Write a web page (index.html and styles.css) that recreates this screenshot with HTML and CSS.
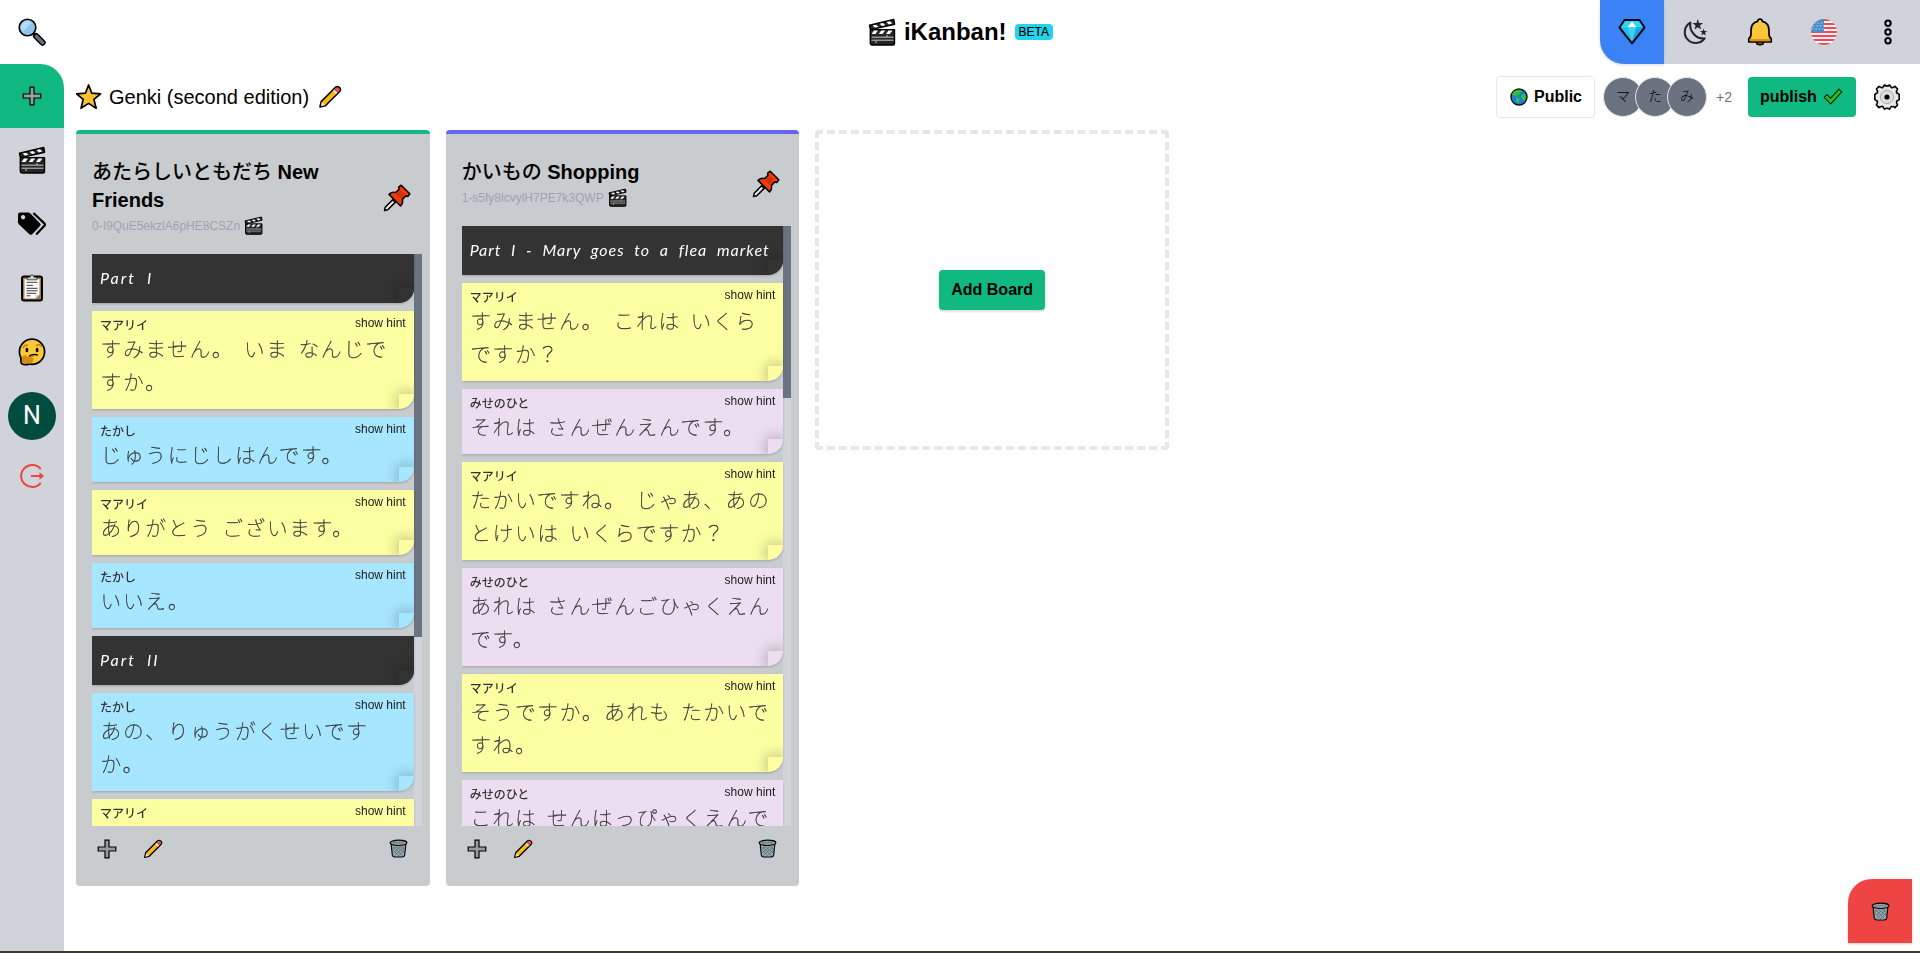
FILE: index.html
```html
<!DOCTYPE html>
<html lang="en">
<head>
<meta charset="utf-8">
<title>iKanban!</title>
<link rel="stylesheet" href="styles.css">
</head>
<body>
<svg class="defs" aria-hidden="true">
  <symbol id="clapper" viewBox="0 0 28 28">
    <path d="M1.5 7.2 25.8 1.5 26.6 6.2 3 11.6H26.5V25.5Q26.5 27 25 27H4Q2.3 27 2.3 25.3V11.4Z" fill="#262626" stroke="#000" stroke-width="1.4" stroke-linejoin="round"/>
    <path d="M4.5 7.6 8 6.7 10.6 8.8 7.2 9.7ZM11.5 5.8 15 5 17.4 7.2 14 8ZM18.5 4.1 22 3.3 24.3 5.5 20.8 6.4Z" fill="#fff"/>
    <path d="M6 12.5H10L7.4 16H3.6ZM13.2 12.5H17.2L14.6 16H10.8ZM20.4 12.5H24.4L21.8 16H18Z" fill="#fff"/>
    <path d="M3.5 19.2H25.5M3.5 22.2H25.5M19 17V19M8 22.5V25" stroke="#c8c8c8" stroke-width="1"/>
  </symbol>
  <symbol id="plus" viewBox="0 0 20 20">
    <path d="M8 1.2H12V8H18.8V12H12V18.8H8V12H1.2V8H8Z" fill="#9b9b9a" stroke="#000" stroke-width="1.2"/>
  </symbol>
  <symbol id="pencil" viewBox="0 0 24 24">
    <path d="M2 22 3.2 16.6 17 2.8Q19.2.7 21.6 2.6 23.4 4.8 21.2 7L7.4 20.8Z" fill="#fcb90e" stroke="#000" stroke-width="1.6" stroke-linejoin="round"/>
    <path d="M17.4 3.7Q19.4 1.9 21 3.2 22.4 5 20.5 6.7L19.4 7.7 16.2 4.9Z" fill="#e8465a"/>
    <path d="M16.2 4.9 19.4 7.7 17.9 9.2 14.8 6.3Z" fill="#e3e3e3"/>
    <path d="M3.8 17.1 7 20.2 2.9 21.2Z" fill="#f5d6d8"/>
  </symbol>
  <symbol id="trash" viewBox="0 0 20 20">
    <path d="M2.2 4.6 3.5 17Q3.9 19 6.2 19H13.8Q16.1 19 16.5 17L17.8 4.6Z" fill="#9aabb2" stroke="#000" stroke-width="1.2"/>
    <path d="M4.2 8 14.5 17.5M8 8 16 14.5M12 8 16.6 11.2M4.8 12 10 17.5M15.8 8 5.5 17.5M12 8 4.8 14.4M8 8 4 11M16 11.5 10 17.5" stroke="#55646b" stroke-width=".8"/>
    <ellipse cx="10" cy="4" rx="8.9" ry="2.8" fill="#8fa0a7" stroke="#000" stroke-width="1.2"/>
    <path d="M4 4H16" stroke="#5c6c73" stroke-dasharray="2 1"/>
  </symbol>
  <symbol id="pin" viewBox="0 0 28 28">
    <path d="M1.5 26.6 2.2 23.2 9.6 15.8 12.2 18.4 4.8 25.8Z" fill="#e6e6e6" stroke="#000" stroke-width="1.5" stroke-linejoin="round"/>
    <path d="M18.2 1.2 26.8 9.8 25 12.4 22.8 12 19.4 15.4Q20.4 19 17.6 22L6 10.4Q9 7.6 12.6 8.6L16 5.2 15.6 3Z" fill="#f0390e" stroke="#000" stroke-width="1.5" stroke-linejoin="round"/>
    <path d="M12.8 10 17 6 22 11 18 14.6Z" fill="#cc3404"/>
  </symbol>
</svg>

<header class="topbar">
  <div class="tile">
    <svg width="28" height="28" viewBox="0 0 28 28">
      <path d="M18 18 24.6 24.6" stroke="#000" stroke-width="6.2" stroke-linecap="round"/>
      <path d="M14.5 14.5 18.5 18.5" stroke="#000" stroke-width="3"/>
      <path d="M18.4 18.4 24.6 24.6" stroke="#65757d" stroke-width="3.2" stroke-linecap="round"/>
      <circle cx="9.5" cy="9.5" r="8.3" fill="#8cc4f2" stroke="#000" stroke-width="1.6"/>
      <path d="M3.2 10.5A6.5 6.5 0 0 1 13.5 4.4L4.8 14Z" fill="#b5dbf7"/>
    </svg>
  </div>
  <div class="brand">
    <svg width="28" height="28"><use href="#clapper"/></svg>
    <span class="brand-name">iKanban!</span>
    <span class="badge">BETA</span>
  </div>
  <nav class="top-actions">
    <div class="tile tile-blue">
      <svg width="28" height="28" viewBox="0 0 28 28">
        <path d="M6.5 2H21.5L26.5 9.6 14 25.4 1.5 9.6Z" fill="#20b9ea"/>
        <path d="M6.5 2H21.5L26.5 9.6H1.5Z" fill="#31d3f5"/>
        <path d="M14 3.5 18.5 9.2H9.5Z" fill="#fff"/>
        <path d="M9.5 9.2H18.5L14 24Z" fill="#3fd0f5"/><path d="M18.5 9.2H26L14 24Z" fill="#1ca3e0"/>
        <path d="M6.5 2H21.5L26.5 9.6 14 25.4 1.5 9.6Z" fill="none" stroke="#000" stroke-width="1.9" stroke-linejoin="round"/>
      </svg>
    </div>
    <div class="tile">
      <svg width="28" height="28" viewBox="0 0 28 28">
        <path d="M8.4 4.6A10.9 10.9 0 1 0 22.6 20.4C14.4 21.4 7 13.8 8.4 4.6Z" fill="none" stroke="#26272b" stroke-width="2.1" stroke-linejoin="round"/>
        <path d="M15.8 1 17.1 5H21.2L18 7.5 19.1 11.5 15.8 9.2 12.5 11.5 13.6 7.5 10.4 5H14.5Z" fill="#26272b"/>
        <path d="M21.6 10.4 22.5 13.1H25.2L23.1 14.8 23.9 17.4 21.6 15.9 19.3 17.4 20.1 14.8 18 13.1H20.7Z" fill="#26272b"/>
      </svg>
    </div>
    <div class="tile">
      <svg width="28" height="28" viewBox="0 0 28 28">
        <ellipse cx="14" cy="24" rx="3.6" ry="2.8" fill="#b25a10" stroke="#000" stroke-width="1.5"/>
        <path d="M2.8 24V20.5Q5 19.4 5 16V12.5Q5 5 11.6 3.4 12 1 14 1 16 1 16.4 3.4 23 5 23 12.5V16Q23 19.4 25.2 20.5V24Z" fill="#fdc63c" stroke="#000" stroke-width="1.7" stroke-linejoin="round"/>
        <path d="M3.7 21H24.3V23.1H3.7Z" fill="#e39114"/>
      </svg>
    </div>
    <div class="tile">
      <svg width="28" height="28" viewBox="0 0 28 28">
        <clipPath id="disc"><circle cx="14" cy="14" r="13"/></clipPath>
        <g clip-path="url(#disc)">
          <rect width="28" height="28" fill="#f7f4f4"/>
          <path d="M0 2H28M0 6H28M0 10H28M0 14H28M0 18H28M0 22H28M0 26H28" stroke="#ee4a5b" stroke-width="2"/>
          <rect width="14" height="14" fill="#4a8fc8"/>
          <path d="M4 5H14M3 8H14M2 11H14" stroke="#b9d6ec" stroke-width="1.2" stroke-dasharray="1.4 2"/>
        </g>
      </svg>
    </div>
    <div class="tile">
      <svg width="28" height="28" viewBox="0 0 28 28"><g fill="none" stroke="#000" stroke-width="2"><circle cx="14" cy="5.3" r="2.7"/><circle cx="14" cy="14" r="2.7"/><circle cx="14" cy="22.7" r="2.7"/></g></svg>
    </div>
  </nav>
</header>

<div class="shell">
  <aside class="sidebar">
    <div class="tile tile-add"><svg width="20" height="20"><use href="#plus"/></svg></div>
    <div class="tile"><svg width="28" height="28"><use href="#clapper"/></svg></div>
    <div class="tile">
      <svg width="28" height="28" viewBox="0 0 28 28">
        <path fill-rule="evenodd" d="M0 4.5Q0 2.5 2 2.5H10.6L12.2 3.2 22.2 13.4Q23.2 14.6 22.2 15.8L14.2 24.3Q12.6 25.4 11.4 24.3L.8 14.2 0 12.6ZM5 5A2.2 2.2 0 1 0 5.1 5Z"/>
        <path d="M15.4 3 26.6 13.6Q27.4 14.6 26.6 15.6L18.2 24.6" fill="none" stroke="#000" stroke-width="2.2"/>
      </svg>
    </div>
    <div class="tile">
      <svg width="28" height="28" viewBox="0 0 28 28">
        <rect x="4" y="2.6" width="20" height="24" rx="2" fill="#a9744a" stroke="#000" stroke-width="2"/>
        <path d="M6.5 5H21.5V20.5L17.5 24.6H6.5Z" fill="#fff"/><path d="M21.5 20.5H17.5V24.6Z" fill="#d8d8d8"/>
        <path d="M9 5.8V3.2H11.8Q12 .8 14 .8T16.2 3.2H19V5.8Z" fill="#cfcfcf" stroke="#222" stroke-width=".8"/>
        <path d="M8.5 8.3H19.5M8.5 11.3H15M8.5 14.3H19.5M8.5 16.8H19.5M8.5 19.3H18M8.5 21.8H12.5" stroke="#3a3a3a"/>
      </svg>
    </div>
    <div class="tile">
      <svg width="28" height="28" viewBox="0 0 28 28">
        <circle cx="14" cy="13.7" r="12.6" fill="#fcc836" stroke="#000" stroke-width="1.7"/>
        <path d="M3.2 25Q2.4 20 4.4 18.5 6.8 16 9.5 18.8L16 17.6Q17 18.6 12.6 20.3 16.4 19.6 15.6 21.6 15.2 24.5 10.5 26.3 6 27 3.2 25Z" fill="#d98a14"/>
        <path d="M5 10Q6.8 6.2 10 7.4M18 7.8Q21 5.2 23.8 8.8" fill="none" stroke="#c07d13" stroke-width="1.5"/>
        <ellipse cx="8.9" cy="12" rx="1.4" ry="2.3"/><ellipse cx="19.1" cy="12" rx="1.4" ry="2.3"/>
        <path d="M11 18.2Q15 15.8 19.8 17" fill="none" stroke="#000" stroke-width="1.5"/>
        <path d="M3.2 25.4Q2.6 22.5 3 20M3.2 25.4Q6 27.6 11 26.3" fill="none" stroke="#000" stroke-width="1.6"/>
      </svg>
    </div>
    <div class="tile"><span class="profile">N</span></div>
    <div class="tile tile-short">
      <svg width="26" height="26" viewBox="0 0 26 26"><path d="M21.8 6.2A11 11 0 1 0 21.8 19.8" fill="none" stroke="#f04343" stroke-width="2"/><path d="M12 13H22" stroke="#f04343" stroke-width="2"/><path d="M20.5 9.3 25.2 13 20.5 16.7Z" fill="#f04343"/></svg>
    </div>
  </aside>

  <main class="main">
    <div class="titlebar">
      <svg width="26" height="26" viewBox="0 0 26 26"><path d="M12.6 1 15.8 9.2 24.6 9.8 17.9 15.4 20.2 24.2 12.6 19.4 5 24.2 7.2 15.4.6 9.8 9.4 9.2Z" fill="#fcc02e" stroke="#000" stroke-width="1.7" stroke-linejoin="round"/></svg>
      <h1 class="project">Genki (second edition)</h1>
      <svg width="24" height="24"><use href="#pencil"/></svg>
      <div class="tools">
        <div class="btn btn-outline">
          <svg width="18" height="18" viewBox="0 0 18 18"><circle cx="9" cy="9" r="8" fill="#1b7fd8" stroke="#111" stroke-width="1.4"/><path d="M3.4 3.8Q6 1.6 10 1.8L12 3.2 9.8 4.8 9.4 7 6.8 7 7.4 8.8 4.5 7.8 2 6.5ZM12 6.5 14.8 5.6 16.2 8.6 14.8 12.5 12.6 11.5 11 9ZM6.5 9.5 10 10.8 9.2 13.6 7.6 15.8 6 12.5Z" fill="#34c32c"/></svg>
          <span>Public</span>
        </div>
        <div class="avatars"><span class="avatar">マ</span><span class="avatar">た</span><span class="avatar">み</span></div>
        <span class="more">+2</span>
        <div class="btn btn-green">
          <span>publish</span>
          <svg width="20" height="18" viewBox="0 0 20 18"><path d="M1.2 9.4 4 6.6 7.6 10.4 16 1.2 18.8 3.8 7.8 15.8Z" fill="#22c818" stroke="#0a1a08" stroke-width="1.1" stroke-linejoin="round"/></svg>
        </div>
        <svg width="28" height="28" viewBox="0 0 28 28">
          <path d="M11.4 2Q14 4 16.6 2L18.4 4.6Q20 5 22 3.4L24.6 6Q23 8 23.6 9.8L26.2 11.4V16.6L23.6 18.2Q23 20 24.6 22L22 24.6Q20 23 18.2 23.6L16.6 26.2Q14 24.2 11.4 26.2L9.8 23.6Q8 23 6 24.6L3.4 22Q5 20 4.4 18.2L1.8 16.6V11.4L4.4 9.8Q5 8 3.4 6L6 3.4Q8 5 9.6 4.6Z" fill="#e8e8e8" stroke="#000" stroke-width="1.6" stroke-linejoin="round"/>
          <circle cx="14" cy="14" r="6.6" fill="#dedede" stroke="#9a9a9a" stroke-width=".8"/><circle cx="14" cy="14" r="2.6"/>
        </svg>
      </div>
    </div>

    <div class="boards">
      <section class="board board-green">
        <header class="board-head">
          <div>
            <h2 class="board-title"><span class="kana">あたらしいともだち</span> New<br>Friends</h2>
            <div class="meta"><span>0-I9QuE5ekzlA6pHE8CSZn</span><svg width="19" height="19"><use href="#clapper"/></svg></div>
          </div>
          <svg width="28" height="28"><use href="#pin"/></svg>
        </header>
        <div class="viewport">
          <div class="cards">
            <article class="card dark"><p class="hand hand-wide">Part I</p></article>
            <article class="card yellow"><div class="row"><b>マアリイ</b><span>show hint</span></div><p class="say">すみません。 いま なんじで<br>すか。</p></article>
            <article class="card blue"><div class="row"><b>たかし</b><span>show hint</span></div><p class="say">じゅうにじしはんです。</p></article>
            <article class="card yellow"><div class="row"><b>マアリイ</b><span>show hint</span></div><p class="say">ありがとう ございます。</p></article>
            <article class="card blue"><div class="row"><b>たかし</b><span>show hint</span></div><p class="say">いいえ。</p></article>
            <article class="card dark"><p class="hand hand-wide">Part II</p></article>
            <article class="card blue"><div class="row"><b>たかし</b><span>show hint</span></div><p class="say">あの、りゅうがくせいです<br>か。</p></article>
            <article class="card yellow card-tall"><div class="row"><b>マアリイ</b><span>show hint</span></div></article>
          </div>
          <div class="track"><div class="thumb thumb-long"></div></div>
        </div>
        <footer class="board-foot"><svg width="20" height="20"><use href="#plus"/></svg><svg width="20" height="20"><use href="#pencil"/></svg><svg class="end" width="19" height="19"><use href="#trash"/></svg></footer>
      </section>

      <section class="board board-indigo">
        <header class="board-head">
          <div>
            <h2 class="board-title"><span class="kana">かいもの</span> Shopping</h2>
            <div class="meta"><span>1-s5fy8lcvylH7PE7k3QWP</span><svg width="19" height="19"><use href="#clapper"/></svg></div>
          </div>
          <svg width="28" height="28"><use href="#pin"/></svg>
        </header>
        <div class="viewport">
          <div class="cards">
            <article class="card dark"><p class="hand">Part I - Mary goes to a flea market</p></article>
            <article class="card yellow"><div class="row"><b>マアリイ</b><span>show hint</span></div><p class="say">すみません。 これは いくら<br>ですか？</p></article>
            <article class="card pink"><div class="row"><b>みせのひと</b><span>show hint</span></div><p class="say">それは さんぜんえんです。</p></article>
            <article class="card yellow"><div class="row"><b>マアリイ</b><span>show hint</span></div><p class="say">たかいですね。 じゃあ、あの<br>とけいは いくらですか？</p></article>
            <article class="card pink"><div class="row"><b>みせのひと</b><span>show hint</span></div><p class="say">あれは さんぜんごひゃくえん<br>です。</p></article>
            <article class="card yellow"><div class="row"><b>マアリイ</b><span>show hint</span></div><p class="say">そうですか。あれも たかいで<br>すね。</p></article>
            <article class="card pink card-tall"><div class="row"><b>みせのひと</b><span>show hint</span></div><p class="say">これは せんはっぴゃくえんで</p></article>
          </div>
          <div class="track"><div class="thumb thumb-short"></div></div>
        </div>
        <footer class="board-foot"><svg width="20" height="20"><use href="#plus"/></svg><svg width="20" height="20"><use href="#pencil"/></svg><svg class="end" width="19" height="19"><use href="#trash"/></svg></footer>
      </section>

      <section class="placeholder"><div class="btn btn-green btn-add">Add Board</div></section>
    </div>
  </main>
</div>
<div class="fab"><svg width="19" height="19"><use href="#trash"/></svg></div>
</body>
</html>
```
FILE: styles.css
```css
* { box-sizing: border-box; }
body {
  margin: 0;
  height: 953px;
  overflow: hidden;
  display: flex;
  flex-direction: column;
  background: #fff;
  border-bottom: 2px solid #3d3a30;
  color: #000;
  font-family: "Liberation Sans", "Noto Sans CJK JP", sans-serif;
}
svg { display: block; flex: none; }
.defs { position: absolute; width: 0; height: 0; }
h1, h2, p { margin: 0; }

.tile { width: 64px; height: 64px; flex: none; display: flex; align-items: center; justify-content: center; }
.topbar { height: 64px; flex: none; display: grid; grid-template-columns: 320px 1fr 320px; }
.topbar > .tile svg { margin-bottom: 1px; }
.brand { display: flex; align-items: center; justify-content: center; padding-left: 1px; }
.brand-name { font-size: 24px; font-weight: 700; margin-left: 8px; }
.badge { margin-left: 8px; height: 16px; padding: 0 4px; border-radius: 4px; background: #22d3ee; font-size: 12px; line-height: 16px; -webkit-text-stroke: .2px #000; }
.top-actions { display: flex; background: linear-gradient(90deg, #fff 64px, #d1d3db 64px); }
.tile-blue { background: #3b82f6; border-bottom-left-radius: 24px; box-shadow: 0 1px 3px rgba(0, 0, 0, .15); }

.shell { flex: 1; min-height: 0; display: flex; }
.sidebar { width: 64px; flex: none; background: linear-gradient(#fff 64px, #d1d3db 64px); }
.tile-add { background: #10b981; border-top-right-radius: 24px; }
.tile-short { height: 56px; }
.profile { width: 48px; height: 48px; border-radius: 50%; background: #004d40; color: #fff; font: 25px/48px Roboto, sans-serif; text-align: center; }

.main { flex: 1; min-width: 0; display: flex; flex-direction: column; padding-left: 12px; }
.titlebar { height: 66px; display: flex; align-items: center; padding-right: 19px; }
.project { font-size: 20px; font-weight: 400; margin: 0 9px 0 7px; }
.tools { margin-left: auto; display: flex; align-items: center; }
.btn { height: 40px; display: flex; align-items: center; font-size: 16px; font-weight: 700; border-radius: 4px; }
.btn-outline { height: 42px; width: 99px; padding: 0 0 1px 13px; gap: 6px; border: 1px solid #e5e7eb; }
.btn-green { background: #10b981; padding: 0 12px; gap: 6px; }
.tools .btn-green { width: 108px; }
.tools > svg { margin-left: 17px; }
.avatars { display: flex; margin-left: 8px; }
.avatar { width: 40px; height: 40px; border-radius: 50%; border: 1px solid #e5e7eb; background: #6b7280; font-size: 14px; font-weight: 300; line-height: 36px; text-align: center; }
.avatar + .avatar { margin-left: -8px; }
.more { width: 41px; padding-left: 9px; font-size: 14px; color: #6b7280; }

.boards { display: flex; gap: 16px; align-items: flex-start; }
.board, .placeholder { width: 353.67px; border-radius: 4px; }
.board { height: 756px; display: flex; flex-direction: column; padding: 24px 8px 0 16px; background: #c9cccf; border-top: 4px solid; }
.board-green { border-top-color: #10b981; }
.board-indigo { border-top-color: #6366f1; }
.board-head { display: flex; align-items: center; justify-content: space-between; padding-right: 11px; margin-bottom: 16px; }
.board-title { font-size: 20px; line-height: 28px; font-weight: 700; }
.kana { font-weight: 500; }
.meta { height: 24px; display: flex; align-items: center; gap: 4px; font-size: 12px; color: #9ca3af; }
.meta svg { margin-bottom: 1px; }
.viewport { flex: 1; min-height: 0; display: flex; overflow: hidden; }
.cards { flex: 1; min-width: 0; display: flex; flex-direction: column; gap: 8px; }
.track { width: 8px; background: #d1d5db; }
.thumb { background: #6b7280; }
.thumb-long { height: 383px; }
.thumb-short { height: 172px; }
.board-foot { height: 60px; display: flex; gap: 26px; padding: 13px 14px 0 5px; }
.end { margin-left: auto; }

.card { position: relative; flex: none; overflow: hidden; padding: 0 8px 11px; border-bottom-right-radius: 15px; color: #333; filter: drop-shadow(0 1px 1px rgba(0, 0, 0, .2)); }
.card::after { content: ""; position: absolute; right: 0; bottom: 0; width: 15px; height: 15px; background: inherit; box-shadow: 0 0 15px 0 rgba(0, 0, 0, .4); }
.card-tall { height: 98px; }
.yellow { background: #fdffa3; }
.blue { background: #a7e6ff; }
.pink { background: #ecdef0; }
.dark { height: 49px; background: #333; color: #fff; }
.row { height: 21px; display: flex; justify-content: space-between; font-size: 12px; }
.row b { line-height: 30px; font-weight: 500; }
.row span { line-height: 24px; color: #1a1a1a; }
.say { font-family: "Noto Sans CJK JP", sans-serif; font-size: 20.8px; font-weight: 100; line-height: 33px; letter-spacing: 1.6px; word-spacing: 3.5px; white-space: nowrap; padding-left: .5px; -webkit-text-stroke: .3px #333; }
.hand { font-family: Lato, sans-serif; font-size: 16px; font-style: italic; font-weight: 400; line-height: 47px; letter-spacing: 1px; word-spacing: 5px; white-space: nowrap; }
.hand-wide { letter-spacing: 2.1px; }

.placeholder { height: 320px; display: flex; align-items: center; justify-content: center; border: 4px dashed #e5e7eb; }
.btn-add { box-shadow: 0 1px 3px rgba(0, 0, 0, .2); }
.fab { position: fixed; right: 8px; bottom: 10px; width: 64px; height: 64px; display: flex; align-items: center; justify-content: center; background: #ef4444; border-top-left-radius: 24px; box-shadow: 0 1px 3px rgba(0, 0, 0, .2); }
```
